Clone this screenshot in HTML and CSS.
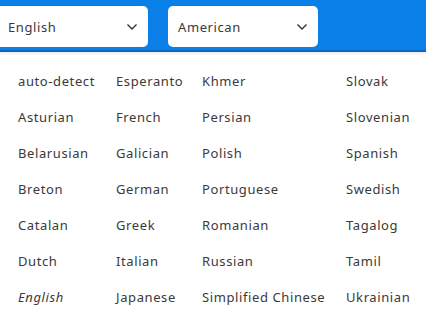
FILE: index.html
```html
<!DOCTYPE html>
<html lang="en">

<head>
    <meta charset="UTF-8">
    <meta name="viewport" content="width=device-width, initial-scale=1.0">
    <title>Language Picker</title>
    <link rel="stylesheet" href="styles.css">
</head>

<body>

    <div class="toolbar">
        <div class="select select-lang">
            <span>English</span>
            <svg class="chevron" width="12" height="8" viewBox="0 0 12 8"><path d="M1.5 1.5 L6 6 L10.5 1.5" fill="none" stroke="#333" stroke-width="1.4"/></svg>
        </div>
        <div class="select select-variant">
            <span>American</span>
            <svg class="chevron" width="12" height="8" viewBox="0 0 12 8"><path d="M1.5 1.5 L6 6 L10.5 1.5" fill="none" stroke="#333" stroke-width="1.4"/></svg>
        </div>
    </div>

    <ul class="lang-list">
        <li>auto-detect</li>
        <li>Asturian</li>
        <li>Belarusian</li>
        <li>Breton</li>
        <li>Catalan</li>
        <li>Dutch</li>
        <li class="current">English</li>
        <li>Esperanto</li>
        <li>French</li>
        <li>Galician</li>
        <li>German</li>
        <li>Greek</li>
        <li>Italian</li>
        <li>Japanese</li>
        <li>Khmer</li>
        <li>Persian</li>
        <li>Polish</li>
        <li>Portuguese</li>
        <li>Romanian</li>
        <li>Russian</li>
        <li>Simplified Chinese</li>
        <li>Slovak</li>
        <li>Slovenian</li>
        <li>Spanish</li>
        <li>Swedish</li>
        <li>Tagalog</li>
        <li>Tamil</li>
        <li>Ukrainian</li>
    </ul>

</body>

</html>
```

FILE: styles.css
```css
body {
    margin: 0;
    background-color: #fff;
    font-family: "Noto Sans", sans-serif;
    color: #3a3a3a;
    overflow: hidden;
}

.toolbar {
    display: flex;
    gap: 20px;
    height: 42px;
    padding: 6px 0 2px 0;
    background-color: #0a7fe8;
    border-bottom: 2px solid #0866c4;
    box-shadow: 0 1px 3px rgba(0, 0, 0, 0.12);
}

.select {
    display: flex;
    align-items: center;
    justify-content: space-between;
    height: 41px;
    background-color: #fff;
    border-radius: 5px;
    font-size: 13px;
    letter-spacing: 0.6px;
    box-sizing: border-box;
}

.select-lang {
    width: 156px;
    margin-left: -8px;
    padding: 0 10px 0 16px;
}

.select-variant {
    width: 150px;
    padding: 0 10px 0 10px;
}

.chevron {
    display: block;
}

.lang-list {
    list-style: none;
    margin: 0;
    padding: 20px 0 0 18px;
    display: grid;
    grid-template-rows: repeat(7, 36px);
    grid-template-columns: 98px 86px 144px auto;
    grid-auto-flow: column;
    font-size: 13px;
    letter-spacing: 0.6px;
}

.lang-list li {
    line-height: 18px;
    white-space: nowrap;
}

.lang-list .current {
    font-style: italic;
}
```
